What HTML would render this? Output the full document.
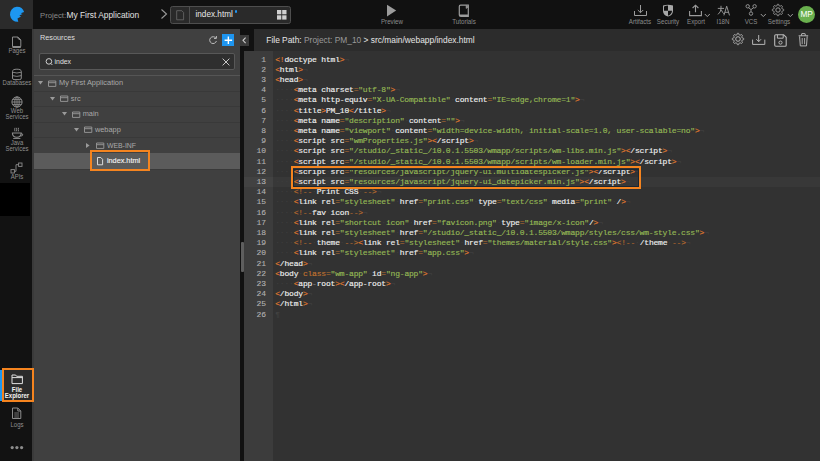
<!DOCTYPE html>
<html><head><meta charset="utf-8">
<style>
*{margin:0;padding:0;box-sizing:border-box}
html,body{width:820px;height:461px;overflow:hidden;background:#323232;font-family:"Liberation Sans",sans-serif;position:relative}
.a{position:absolute}
svg{position:absolute;overflow:visible}
#top{left:0;top:0;width:820px;height:29px;background:#111}
#logo{left:0;top:0;width:33px;height:29px;background:#2b2b2b}
#side{left:0;top:29px;width:32px;height:432px;background:#121212}
#sideb{left:32px;top:29px;width:2px;height:432px;background:#3a3a3a}
#res{left:34px;top:29px;width:206px;height:432px;background:#404040}
#div{left:240px;top:29px;width:4px;height:432px;background:#111}
#divtop{left:240px;top:29px;width:14px;height:21.5px;background:#111}
#ehead{left:254px;top:29px;width:566px;height:21.5px;background:#2c2c2c}
#gut{left:244px;top:50.5px;width:29px;height:411px;background:#3c3c3c}
#code{left:273px;top:50.5px;width:547px;height:411px;background:#323232}
.tl{color:#8c8c8c;font-size:6.7px;white-space:nowrap;text-align:center;width:40px;line-height:7px;transform:scaleX(0.925)}
.sl{color:#8f8f8f;font-size:6.5px;white-space:nowrap;text-align:center;width:32px;left:1px;line-height:6px;transform:scaleX(0.925)}
.tr{color:#a9a9a9;font-size:7.4px;white-space:nowrap;line-height:9px}
.sep{left:34px;width:206px;height:1px;background:#393939}
#lines{left:275.2px;top:54.6px;font-family:"Liberation Mono",monospace;font-size:8px;letter-spacing:-0.19px;line-height:10.21px;color:#f0f0f0;-webkit-text-stroke:0.15px}
#nums{left:244px;top:54.6px;width:21.8px;text-align:right;font-family:"Liberation Mono",monospace;font-size:8px;letter-spacing:-0.19px;line-height:10.21px;color:#b2b2b2;white-space:pre;-webkit-text-stroke:0.1px}
.p{color:#e07a2e}.q{color:#b9712f}.s{color:#95b955}.c{color:#b86a2e}.k{color:#c0722f}.w{color:#3f3f3f;-webkit-text-stroke:0}.e{color:#424242;-webkit-text-stroke:0}.d{color:#8a8a8a}
.ln{height:10.21px;white-space:pre}
.ob{border:2.4px solid #f5841f}
</style></head><body>
<div class="a" id="top"></div>
<div class="a" id="logo"></div>
<svg width="33" height="29" style="left:0;top:0" viewBox="0 0 33 29">
<path d="M16.7 6.8 A7.5 7.5 0 0 1 24.1 12 L20.7 13.2 L22.6 14.1 L19.3 15.6 L21.0 16.4 L17.5 18.5 L18.3 21.8 A7.5 7.5 0 0 1 16.7 6.8 Z" fill="#1d97f1"/>
</svg>
<div class="a" style="left:40px;top:10.5px;font-size:7.7px;color:#8a8a8a;white-space:nowrap;line-height:9px">Project:</div>
<div class="a" style="left:66.5px;top:10px;font-size:8.4px;color:#e2e2e2;white-space:nowrap;line-height:10px">My First Application</div>
<svg width="10" height="14" style="left:159px;top:7px"><path d="M2.5 2.5 L7.5 7 L2.5 11.5" fill="none" stroke="#9a9a9a" stroke-width="1.1"/></svg>
<div class="a" style="left:170px;top:6px;width:121px;height:17.7px;border:1px solid #4e4e4e;border-radius:2.5px;background:#2a2a2a"></div>
<div class="a" style="left:189px;top:6.5px;width:1px;height:17px;background:#4e4e4e"></div>
<svg width="10" height="12" style="left:176px;top:9.5px"><path d="M0.7 0.7 H5.8 L7.6 2.5 V9.8 H0.7 Z" fill="none" stroke="#6c6c6c" stroke-width="0.8"/></svg>
<div class="a" style="left:195.5px;top:10px;font-size:8.2px;color:#e8e8e8;white-space:nowrap;line-height:10px">index.html</div>
<div class="a" style="left:234.8px;top:10.4px;width:2.2px;height:2.2px;border-radius:50%;background:#2196f3"></div>
<svg width="11" height="11" style="left:276.8px;top:10.2px"><rect x="0" y="0" width="4.3" height="4.3" fill="#cfcfcf"/><rect x="5.2" y="0" width="4.3" height="4.3" fill="#cfcfcf"/><rect x="0" y="5.3" width="4.3" height="4.3" fill="#cfcfcf"/><rect x="5.2" y="5.3" width="4.3" height="4.3" fill="#cfcfcf"/></svg>
<!-- preview -->
<svg width="12" height="14" style="left:386px;top:4px"><path d="M1 0.8 L10.2 6.6 L1 12.4 Z" fill="#9c9c9c"/></svg>
<div class="a tl" style="left:371.5px;top:18px">Preview</div>
<svg width="13" height="14" style="left:458px;top:3.5px"><path d="M2.6 1.2 H10.3 V12.4 H2.8 Q1.3 12.4 1.3 10.9 V2.5 Q1.3 1.2 2.6 1.2 Z M1.3 10.4 Q1.3 11.2 2.6 11.2 H10.3" fill="none" stroke="#9c9c9c" stroke-width="1.2"/><path d="M8.2 1.2 V4.4 L10.3 2.8" fill="#9c9c9c" stroke="#9c9c9c" stroke-width="0.8"/></svg>
<div class="a tl" style="left:444.2px;top:18px">Tutorials</div>
<!-- right icons -->
<svg width="16" height="14" style="left:633px;top:4px"><path d="M1.5 7 V11.5 H13.5 V7" fill="none" stroke="#9c9c9c" stroke-width="1"/><path d="M7.5 1 V8.6 M4.8 6 L7.5 8.7 L10.2 6" fill="none" stroke="#9c9c9c" stroke-width="1"/></svg>
<div class="a tl" style="left:620.4px;top:18px">Artifacts</div>
<svg width="14" height="15" style="left:662px;top:4px"><path d="M1 1.6 Q6 0 11 1.6 V7 Q11 11 6 12.6 Q1 11 1 7 Z" fill="#a8a8a8"/><path d="M2 2.4 Q4 1.7 6 1.6 V6.8 H2 Z M6 6.8 H10 Q9.8 10.4 6 11.8 Z" fill="#111"/></svg>
<div class="a tl" style="left:648px;top:18px">Security</div>
<svg width="16" height="14" style="left:688px;top:4px"><path d="M1.6 7 V11.6 H13.4 V7" fill="none" stroke="#9c9c9c" stroke-width="1.1"/><path d="M7.5 8.2 V1.4 M4.6 4 L7.5 1.2 L10.4 4" fill="none" stroke="#9c9c9c" stroke-width="1.1"/></svg>
<svg width="8" height="6" style="left:704px;top:13px"><path d="M0.8 1 L3.3 3.6 L5.8 1" fill="none" stroke="#9c9c9c" stroke-width="1"/></svg>
<div class="a tl" style="left:675.8px;top:18px">Export</div>
<svg width="14" height="12" style="left:716.5px;top:4.5px"><path d="M0.8 3.4 H7 M4 0.8 V3.8 Q3.8 7.2 1 9.4 M4.3 4.8 Q5.4 7.6 7.2 9" fill="none" stroke="#a0a0a0" stroke-width="0.9"/><path d="M6.9 10.4 L9.7 1.2 L12.5 10.4 M7.9 7.3 H11.5" fill="none" stroke="#a0a0a0" stroke-width="0.9"/></svg>
<div class="a tl" style="left:703.4px;top:18px">I18N</div>
<svg width="14" height="14" style="left:744px;top:3.1px"><circle cx="3.7" cy="3.3" r="1.7" fill="none" stroke="#9c9c9c" stroke-width="0.9"/><circle cx="10.6" cy="3.3" r="1.7" fill="none" stroke="#9c9c9c" stroke-width="0.9"/><circle cx="7" cy="10.6" r="1.7" fill="none" stroke="#9c9c9c" stroke-width="0.9"/><path d="M4.6 4.7 L7 6.6 L9.7 4.7 M7 6.6 V8.9" fill="none" stroke="#9c9c9c" stroke-width="0.9"/></svg>
<svg width="8" height="6" style="left:759.5px;top:13px"><path d="M0.8 1 L3.3 3.6 L5.8 1" fill="none" stroke="#9c9c9c" stroke-width="1"/></svg>
<div class="a tl" style="left:730.9px;top:18px">VCS</div>
<svg width="16" height="16" style="left:770.4px;top:2.4px"><path d="M13.70 8.00 L13.69 8.37 L13.50 8.72 L12.85 8.97 L12.20 9.13 L11.98 9.35 L11.88 9.61 L11.77 9.86 L11.77 10.17 L12.12 10.75 L12.40 11.38 L12.29 11.76 L12.03 12.03 L11.76 12.29 L11.38 12.40 L10.75 12.12 L10.18 11.77 L9.86 11.77 L9.61 11.88 L9.35 11.98 L9.13 12.20 L8.97 12.85 L8.72 13.50 L8.37 13.69 L8.00 13.70 L7.63 13.69 L7.28 13.50 L7.03 12.85 L6.87 12.20 L6.65 11.98 L6.39 11.88 L6.14 11.77 L5.83 11.77 L5.25 12.12 L4.62 12.40 L4.24 12.29 L3.97 12.03 L3.71 11.76 L3.60 11.38 L3.88 10.75 L4.23 10.17 L4.23 9.86 L4.12 9.61 L4.02 9.35 L3.80 9.13 L3.15 8.97 L2.50 8.72 L2.31 8.37 L2.30 8.00 L2.31 7.63 L2.50 7.28 L3.15 7.03 L3.80 6.87 L4.02 6.65 L4.12 6.39 L4.23 6.14 L4.23 5.83 L3.88 5.25 L3.60 4.62 L3.71 4.24 L3.97 3.97 L4.24 3.71 L4.62 3.60 L5.25 3.88 L5.82 4.23 L6.14 4.23 L6.39 4.12 L6.65 4.02 L6.87 3.80 L7.03 3.15 L7.28 2.50 L7.63 2.31 L8.00 2.30 L8.37 2.31 L8.72 2.50 L8.97 3.15 L9.13 3.80 L9.35 4.02 L9.61 4.12 L9.86 4.23 L10.18 4.23 L10.75 3.88 L11.38 3.60 L11.76 3.71 L12.03 3.97 L12.29 4.24 L12.40 4.62 L12.12 5.25 L11.77 5.82 L11.77 6.14 L11.88 6.39 L11.98 6.65 L12.20 6.87 L12.85 7.03 L13.50 7.28 L13.69 7.63 Z" fill="none" stroke-linejoin="round" stroke="#9c9c9c" stroke-width="1"/><circle cx="8" cy="8" r="2.2" fill="none" stroke="#9c9c9c" stroke-width="1"/></svg>
<svg width="8" height="6" style="left:787px;top:13px"><path d="M0.8 1 L3.3 3.6 L5.8 1" fill="none" stroke="#9c9c9c" stroke-width="1"/></svg>
<div class="a tl" style="left:758.7px;top:18px">Settings</div>
<div class="a" style="left:798px;top:6px;width:17px;height:17px;border-radius:50%;background:#6ab04e;color:#fff;font-size:8.3px;text-align:center;line-height:17px;letter-spacing:-0.2px">MP</div>
<!-- sidebar -->
<div class="a" id="side"></div>
<div class="a" id="sideb"></div>
<svg width="12" height="14" style="left:11px;top:35.5px"><path d="M1.5 1 H6.6 Q7.6 1.2 9.8 4 V10.5 H1.5 Z M6.6 1 Q6.6 3.4 9.8 4" fill="none" stroke="#8c8c8c" stroke-width="1"/><path d="M1.5 11.2 H9.8" stroke="#8c8c8c" stroke-width="1.6"/></svg>
<div class="a sl" style="top:47.5px">Pages</div>
<svg width="12" height="14" style="left:11px;top:67.5px"><path d="M1.5 3.4 Q1.5 1.2 5.9 1.2 Q10.3 1.2 10.3 3.4 V10 Q10.3 11.6 8.8 11.6 H3 Q1.5 11.6 1.5 10 Z" fill="none" stroke="#8c8c8c" stroke-width="1"/><path d="M1.5 4.2 Q5.9 5.8 10.3 4.2 M1.5 7.6 Q5.9 9.2 10.3 7.6" fill="none" stroke="#8c8c8c" stroke-width="0.9"/></svg>
<div class="a sl" style="top:79.5px">Databases</div>
<svg width="13" height="13" style="left:10.8px;top:95.5px"><circle cx="6" cy="6" r="5.1" fill="none" stroke="#8c8c8c" stroke-width="1"/><ellipse cx="6" cy="6" rx="2.2" ry="5.1" fill="none" stroke="#8c8c8c" stroke-width="0.9"/><path d="M1 6 H11 M1.8 3.4 H10.2 M1.8 8.6 H10.2 M6 1 V11" stroke="#8c8c8c" stroke-width="0.9"/></svg>
<div class="a sl" style="top:108.3px">Web<br>Services</div>
<svg width="13" height="13" style="left:10.8px;top:127px"><path d="M1.4 6 H10.2 Q10.2 10.2 5.8 10.2 Q1.4 10.2 1.4 6 Z" fill="none" stroke="#8c8c8c" stroke-width="1.1"/><path d="M10 6.6 Q12 6.6 11.8 8 Q11.6 9.2 9.4 9" fill="none" stroke="#8c8c8c" stroke-width="0.9"/><path d="M2.2 11.5 H9.4" stroke="#8c8c8c" stroke-width="0.9"/><path d="M4 0.8 Q3.2 2.4 4 4.4 M5.8 0.8 Q5 2.4 5.8 4.4 M7.6 0.8 Q6.8 2.4 7.6 4.4" fill="none" stroke="#8c8c8c" stroke-width="0.9"/></svg>
<div class="a sl" style="top:140.2px">Java<br>Services</div>
<svg width="14" height="13" style="left:10px;top:162px"><rect x="1" y="7.6" width="3.4" height="3.4" fill="none" stroke="#8c8c8c" stroke-width="0.9"/><rect x="8.6" y="1" width="3.4" height="3.4" fill="none" stroke="#8c8c8c" stroke-width="0.9"/><path d="M4.4 9.3 H6 V2.7 H8.6" fill="none" stroke="#8c8c8c" stroke-width="0.9"/></svg>
<div class="a sl" style="top:173.5px">APIs</div>
<div class="a" style="left:0;top:182.8px;width:30px;height:33px;background:#000"></div>
<!-- file explorer selected -->
<div class="a" style="left:2px;top:369px;width:31px;height:32px;background:#2b2b2b"></div>
<div class="a" style="left:0;top:370px;width:1.6px;height:30.5px;background:#1e97f0"></div>
<svg width="13" height="11" style="left:10.8px;top:374px"><path d="M1 1 H4.6 L5.6 2.3 H11.4 V9.6 H1 Z M1 3.6 H11.4" fill="none" stroke="#e0e0e0" stroke-width="1"/></svg>
<div class="a sl" style="top:386.8px;color:#f2f2f2;font-weight:bold">File<br>Explorer</div>
<div class="a ob" style="left:1.7px;top:368.3px;width:32.3px;height:33.7px;border-width:2.3px"></div>
<svg width="12" height="13" style="left:11px;top:407px"><path d="M1.5 1 H6.8 L9.8 4 V11.5 H1.5 Z M6.8 1 V4 H9.8" fill="none" stroke="#8c8c8c" stroke-width="1"/><path d="M3.3 6 H8 M3.3 8 H8 M3.3 10 H8" stroke="#8c8c8c" stroke-width="0.8"/></svg>
<div class="a sl" style="top:421.8px">Logs</div>
<svg width="14" height="6" style="left:10px;top:445px"><circle cx="2.2" cy="2.6" r="1.6" fill="#8c8c8c"/><circle cx="6.9" cy="2.6" r="1.6" fill="#8c8c8c"/><circle cx="11.6" cy="2.6" r="1.6" fill="#8c8c8c"/></svg>
<!-- resources panel -->
<div class="a" id="res"></div>
<div class="a" style="left:40px;top:33.2px;font-size:7.3px;color:#dedede;white-space:nowrap;line-height:9px">Resources</div>
<svg width="10" height="10" style="left:207.5px;top:35px"><path d="M7.9 3.2 A3.4 3.4 0 1 0 8.4 6" fill="none" stroke="#bdbdbd" stroke-width="1"/><path d="M6 3.4 H8.4 V1" fill="none" stroke="#bdbdbd" stroke-width="1"/></svg>
<div class="a" style="left:221.5px;top:33.6px;width:12.7px;height:12.5px;background:#1e95ef"></div>
<svg width="13" height="13" style="left:221.5px;top:33.6px"><path d="M6.35 2.4 V10.1 M2.6 6.25 H10.1" stroke="#fff" stroke-width="1.4"/></svg>
<div class="a" style="left:39.3px;top:53px;width:196.2px;height:17px;border:1px solid #585858;border-radius:2px;background:#2f2f2f"></div>
<svg width="9" height="9" style="left:44.5px;top:58.3px"><circle cx="3.9" cy="3.4" r="2.8" fill="none" stroke="#d0d0d0" stroke-width="1"/><path d="M5.8 5.4 L7.4 7" stroke="#d0d0d0" stroke-width="1"/></svg>
<div class="a" style="left:54.6px;top:57.2px;font-size:6.9px;color:#e0e0e0;white-space:nowrap;line-height:9px">index</div>
<svg width="9" height="9" style="left:221.8px;top:57.9px"><path d="M0.6 0.6 L7.4 7.4 M7.4 0.6 L0.6 7.4" stroke="#c8c8c8" stroke-width="1"/></svg>
<div class="a sep" style="top:75px;background:#555"></div>
<div class="a sep" style="top:90.5px"></div>
<div class="a sep" style="top:106px"></div>
<div class="a sep" style="top:121.7px"></div>
<div class="a sep" style="top:137.3px"></div>
<div class="a" style="left:34px;top:153px;width:205.5px;height:15.5px;background:#5b5b5b"></div>
<div class="a sep" style="top:168.5px"></div>
<svg width="6" height="5" style="left:37.9px;top:81.45px"><path d="M0 0 H5 L2.5 3.6 Z" fill="#9a9a9a"/></svg>
<svg width="9" height="8" style="left:48px;top:79.85px"><path d="M0.5 1 H7.8 V6.4 H0.5 Z M0.5 2.7 H7.8" fill="none" stroke="#9a9a9a" stroke-width="0.9"/></svg>
<div class="a tr" style="left:59px;top:78.35px">My First Application</div>
<svg width="6" height="5" style="left:50px;top:96.95px"><path d="M0 0 H5 L2.5 3.6 Z" fill="#9a9a9a"/></svg>
<svg width="9" height="8" style="left:59.9px;top:95.35px"><path d="M0.5 1 H7.8 V6.4 H0.5 Z M0.5 2.7 H7.8" fill="none" stroke="#9a9a9a" stroke-width="0.9"/></svg>
<div class="a tr" style="left:70.8px;top:93.85px">src</div>
<svg width="6" height="5" style="left:62px;top:112.45px"><path d="M0 0 H5 L2.5 3.6 Z" fill="#9a9a9a"/></svg>
<svg width="9" height="8" style="left:72px;top:110.85px"><path d="M0.5 1 H7.8 V6.4 H0.5 Z M0.5 2.7 H7.8" fill="none" stroke="#9a9a9a" stroke-width="0.9"/></svg>
<div class="a tr" style="left:82.7px;top:109.35px">main</div>
<svg width="6" height="5" style="left:74px;top:127.95px"><path d="M0 0 H5 L2.5 3.6 Z" fill="#9a9a9a"/></svg>
<svg width="9" height="8" style="left:84px;top:126.35px"><path d="M0.5 1 H7.8 V6.4 H0.5 Z M0.5 2.7 H7.8" fill="none" stroke="#9a9a9a" stroke-width="0.9"/></svg>
<div class="a tr" style="left:94.9px;top:124.85px">webapp</div>
<svg width="5" height="6" style="left:86px;top:142.75px"><path d="M0 0 V5 L3.6 2.5 Z" fill="#9a9a9a"/></svg>
<svg width="9" height="8" style="left:96.2px;top:141.85px"><path d="M0.5 1 H7.8 V6.4 H0.5 Z M0.5 2.7 H7.8" fill="none" stroke="#9a9a9a" stroke-width="0.9"/></svg>
<div class="a tr" style="left:106.9px;top:140.6px;font-size:6.9px">WEB-INF</div>
<svg width="7" height="9" style="left:97px;top:156.55px"><path d="M0.5 0.5 H3.8 L5.6 2.3 V7.8 H0.5 Z" fill="none" stroke="#e8e8e8" stroke-width="0.9"/></svg>
<div class="a tr" style="left:106.9px;top:155.85px;color:#f4f4f4;font-size:7.3px;-webkit-text-stroke:0.12px">index.html</div>
<div class="a ob" style="left:90.2px;top:149.9px;width:59.6px;height:21.1px;border-width:2.5px"></div>
<!-- divider & editor -->
<div class="a" id="div"></div>
<div class="a" id="divtop"></div>
<div class="a" style="left:240px;top:35.2px;width:9px;height:10.7px;background:#3a3a3a"></div>
<svg width="9" height="11" style="left:240px;top:35.2px"><path d="M5.6 2.6 L3 5.35 L5.6 8.1" fill="none" stroke="#cfcfcf" stroke-width="1.1"/></svg>
<div class="a" id="ehead"></div>
<div class="a" style="left:266.3px;top:34.6px;font-size:8.4px;color:#e6e6e6;white-space:nowrap;line-height:10px">File Path: <span style="color:#9a9a9a">Project: PM_10</span> &gt; src/main/webapp/index.html</div>
<svg width="16" height="16" style="left:729.8px;top:31.4px"><path d="M13.70 8.00 L13.69 8.37 L13.50 8.72 L12.85 8.97 L12.20 9.13 L11.98 9.35 L11.88 9.61 L11.77 9.86 L11.77 10.17 L12.12 10.75 L12.40 11.38 L12.29 11.76 L12.03 12.03 L11.76 12.29 L11.38 12.40 L10.75 12.12 L10.18 11.77 L9.86 11.77 L9.61 11.88 L9.35 11.98 L9.13 12.20 L8.97 12.85 L8.72 13.50 L8.37 13.69 L8.00 13.70 L7.63 13.69 L7.28 13.50 L7.03 12.85 L6.87 12.20 L6.65 11.98 L6.39 11.88 L6.14 11.77 L5.83 11.77 L5.25 12.12 L4.62 12.40 L4.24 12.29 L3.97 12.03 L3.71 11.76 L3.60 11.38 L3.88 10.75 L4.23 10.17 L4.23 9.86 L4.12 9.61 L4.02 9.35 L3.80 9.13 L3.15 8.97 L2.50 8.72 L2.31 8.37 L2.30 8.00 L2.31 7.63 L2.50 7.28 L3.15 7.03 L3.80 6.87 L4.02 6.65 L4.12 6.39 L4.23 6.14 L4.23 5.83 L3.88 5.25 L3.60 4.62 L3.71 4.24 L3.97 3.97 L4.24 3.71 L4.62 3.60 L5.25 3.88 L5.82 4.23 L6.14 4.23 L6.39 4.12 L6.65 4.02 L6.87 3.80 L7.03 3.15 L7.28 2.50 L7.63 2.31 L8.00 2.30 L8.37 2.31 L8.72 2.50 L8.97 3.15 L9.13 3.80 L9.35 4.02 L9.61 4.12 L9.86 4.23 L10.18 4.23 L10.75 3.88 L11.38 3.60 L11.76 3.71 L12.03 3.97 L12.29 4.24 L12.40 4.62 L12.12 5.25 L11.77 5.82 L11.77 6.14 L11.88 6.39 L11.98 6.65 L12.20 6.87 L12.85 7.03 L13.50 7.28 L13.69 7.63 Z" fill="none" stroke="#b4b4b4" stroke-width="1"/><circle cx="8" cy="8" r="2.3" fill="none" stroke="#b4b4b4" stroke-width="1"/></svg>
<svg width="15" height="12" style="left:752px;top:34px"><path d="M0.6 5.6 V10.4 H12.8 V5.6" fill="none" stroke="#b4b4b4" stroke-width="1"/><path d="M6.7 1 V7.6 M4.3 5.2 L6.7 7.6 L9.1 5.2" fill="none" stroke="#b4b4b4" stroke-width="1"/></svg>
<svg width="14" height="14" style="left:773.5px;top:33.6px"><path d="M0.7 1.8 Q0.7 0.7 1.8 0.7 H9.6 L12.2 3.3 V11.2 Q12.2 12.2 11.2 12.2 H1.8 Q0.7 12.2 0.7 11.1 Z" fill="none" stroke="#b8b8b8" stroke-width="1.1"/><path d="M3.4 0.8 V4.2 H9.2 V0.8" fill="none" stroke="#b8b8b8" stroke-width="1"/><circle cx="6.5" cy="8.6" r="1.6" fill="none" stroke="#b8b8b8" stroke-width="1"/></svg>
<svg width="12" height="15" style="left:797.5px;top:32.6px"><path d="M0.6 2.8 H10.2 M3.6 2.8 V1 Q3.6 0.6 4 0.6 H6.8 Q7.2 0.6 7.2 1 V2.8" fill="none" stroke="#b4b4b4" stroke-width="1"/><path d="M1.6 3.4 L2.3 12.9 H8.5 L9.2 3.4" fill="none" stroke="#b4b4b4" stroke-width="1"/><path d="M4.2 5 V11.2 M6.6 5 V11.2" stroke="#b4b4b4" stroke-width="0.9"/></svg>
<div class="a" id="gut"></div>
<div class="a" id="code"></div>
<div class="a" style="left:244px;top:176.5px;width:29px;height:10.21px;background:#424242"></div><div class="a" style="left:273px;top:176.5px;width:547px;height:10.21px;background:#383838"></div>
<div class="a" style="left:240.8px;top:242px;width:2.8px;height:29.8px;background:#5e5e5e;border-radius:1px"></div>
<div class="a" id="nums">1
2
3
4
5
6
7
8
9
10
11
12
13
14
15
16
17
18
19
20
21
22
23
24
25
26</div>
<div class="a" id="lines">
<div class="ln"><span class="p">&lt;!</span>doctype<span class="w">·</span>html<span class="p">&gt;</span><span class="e">¬</span></div>
<div class="ln"><span class="p">&lt;</span>html<span class="p">&gt;</span><span class="e">¬</span></div>
<div class="ln"><span class="p">&lt;</span>head<span class="p">&gt;</span><span class="e">¬</span></div>
<div class="ln"><span class="w">····</span><span class="p">&lt;</span>meta<span class="w">·</span>charset<span class="q">=</span><span class="s">"utf-8"</span><span class="p">&gt;</span><span class="e">¬</span></div>
<div class="ln"><span class="w">····</span><span class="p">&lt;</span>meta<span class="w">·</span>http-equiv<span class="q">=</span><span class="s">"X-UA-Compatible"</span><span class="w">·</span>content<span class="q">=</span><span class="s">"IE=edge,chrome=1"</span><span class="p">&gt;</span><span class="e">¬</span></div>
<div class="ln"><span class="w">····</span><span class="p">&lt;</span>title<span class="p">&gt;</span>PM_10<span class="p">&lt;</span>/title<span class="p">&gt;</span><span class="e">¬</span></div>
<div class="ln"><span class="w">····</span><span class="p">&lt;</span>meta<span class="w">·</span>name<span class="q">=</span><span class="s">"description"</span><span class="w">·</span>content<span class="q">=</span><span class="s">""</span><span class="p">&gt;</span><span class="e">¬</span></div>
<div class="ln"><span class="w">····</span><span class="p">&lt;</span>meta<span class="w">·</span>name<span class="q">=</span><span class="s">"viewport"</span><span class="w">·</span>content<span class="q">=</span><span class="s">"width=device-width,</span><span class="w">·</span><span class="s">initial-scale=1.0,</span><span class="w">·</span><span class="s">user-scalable=no"</span><span class="p">&gt;</span><span class="e">¬</span></div>
<div class="ln"><span class="w">····</span><span class="p">&lt;</span>script<span class="w">·</span>src<span class="q">=</span><span class="s">"wmProperties.js"</span><span class="p">&gt;&lt;</span>/script<span class="p">&gt;</span><span class="e">¬</span></div>
<div class="ln"><span class="w">····</span><span class="p">&lt;</span>script<span class="w">·</span>src<span class="q">=</span><span class="s">"/studio/_static_/10.0.1.5503/wmapp/scripts/wm-libs.min.js"</span><span class="p">&gt;&lt;</span>/script<span class="p">&gt;</span><span class="e">¬</span></div>
<div class="ln"><span class="w">····</span><span class="p">&lt;</span>script<span class="w">·</span>src<span class="q">=</span><span class="s">"/studio/_static_/10.0.1.5503/wmapp/scripts/wm-loader.min.js"</span><span class="p">&gt;&lt;</span>/script<span class="p">&gt;</span><span class="e">¬</span></div>
<div class="ln"><span class="w">····</span><span class="p">&lt;</span>script<span class="w">·</span>src<span class="q">=</span><span class="s">"resources/javascript/jquery-ui.multidatespicker.js"</span><span class="p">&gt;&lt;</span>/script<span class="p">&gt;</span><span class="e">¬</span></div>
<div class="ln act"><span class="w">····</span><span class="p">&lt;</span>script<span class="w">·</span>src<span class="q">=</span><span class="s">"resources/javascript/jquery-ui_datepicker.min.js"</span><span class="p">&gt;&lt;</span>/script<span class="p">&gt;</span><span class="e">¬</span></div>
<div class="ln"><span class="w">····</span><span class="c">&lt;!--</span><span class="w">·</span>Print<span class="w">·</span>CSS<span class="w">·</span><span class="c">--&gt;</span><span class="e">¬</span></div>
<div class="ln"><span class="w">····</span><span class="p">&lt;</span>link<span class="w">·</span>rel<span class="q">=</span><span class="s">"stylesheet"</span><span class="w">·</span>href<span class="q">=</span><span class="s">"print.css"</span><span class="w">·</span>type<span class="q">=</span><span class="s">"text/css"</span><span class="w">·</span>media<span class="q">=</span><span class="s">"print"</span><span class="w">·</span>/<span class="p">&gt;</span><span class="e">¬</span></div>
<div class="ln"><span class="w">····</span><span class="c">&lt;!--</span>fav<span class="w">·</span>icon<span class="c">--&gt;</span><span class="e">¬</span></div>
<div class="ln"><span class="w">····</span><span class="p">&lt;</span>link<span class="w">·</span>rel<span class="q">=</span><span class="s">"shortcut</span><span class="w">·</span><span class="s">icon"</span><span class="w">·</span>href<span class="q">=</span><span class="s">"favicon.png"</span><span class="w">·</span>type<span class="q">=</span><span class="s">"image/x-icon"</span>/<span class="p">&gt;</span><span class="e">¬</span></div>
<div class="ln"><span class="w">····</span><span class="p">&lt;</span>link<span class="w">·</span>rel<span class="q">=</span><span class="s">"stylesheet"</span><span class="w">·</span>href<span class="q">=</span><span class="s">"/studio/_static_/10.0.1.5503/wmapp/styles/css/wm-style.css"</span><span class="p">&gt;</span><span class="e">¬</span></div>
<div class="ln"><span class="w">····</span><span class="c">&lt;!--</span><span class="w">·</span>theme<span class="w">·</span><span class="c">--&gt;</span><span class="p">&lt;</span>link<span class="w">·</span>rel<span class="q">=</span><span class="s">"stylesheet"</span><span class="w">·</span>href<span class="q">=</span><span class="s">"themes/material/style.css"</span><span class="p">&gt;</span><span class="c">&lt;!--</span><span class="w">·</span>/theme<span class="w">·</span><span class="c">--&gt;</span><span class="e">¬</span></div>
<div class="ln"><span class="w">····</span><span class="p">&lt;</span>link<span class="w">·</span>rel<span class="q">=</span><span class="s">"stylesheet"</span><span class="w">·</span>href<span class="q">=</span><span class="s">"app.css"</span><span class="p">&gt;</span><span class="e">¬</span></div>
<div class="ln"><span class="p">&lt;</span>/head<span class="p">&gt;</span><span class="e">¬</span></div>
<div class="ln"><span class="p">&lt;</span>body<span class="w">·</span><span class="k">class</span><span class="q">=</span><span class="s">"wm-app"</span><span class="w">·</span>id<span class="q">=</span><span class="s">"ng-app"</span><span class="p">&gt;</span><span class="e">¬</span></div>
<div class="ln"><span class="w">····</span><span class="p">&lt;</span>app<span class="d">-</span>root<span class="p">&gt;&lt;</span>/app-root<span class="p">&gt;</span><span class="e">¬</span></div>
<div class="ln"><span class="p">&lt;</span>/body<span class="p">&gt;</span><span class="e">¬</span></div>
<div class="ln"><span class="p">&lt;</span>/html<span class="p">&gt;</span><span class="e">¬</span></div>
<div class="ln"><span class="e">¶</span></div></div>
<div class="a ob" style="left:291px;top:166.1px;width:350.1px;height:23.1px;border-width:2.4px"></div>
<div class="a" style="left:293.4px;top:168.5px;width:345.3px;height:18.3px;border:1px solid #1b2631"></div>
</body></html>
